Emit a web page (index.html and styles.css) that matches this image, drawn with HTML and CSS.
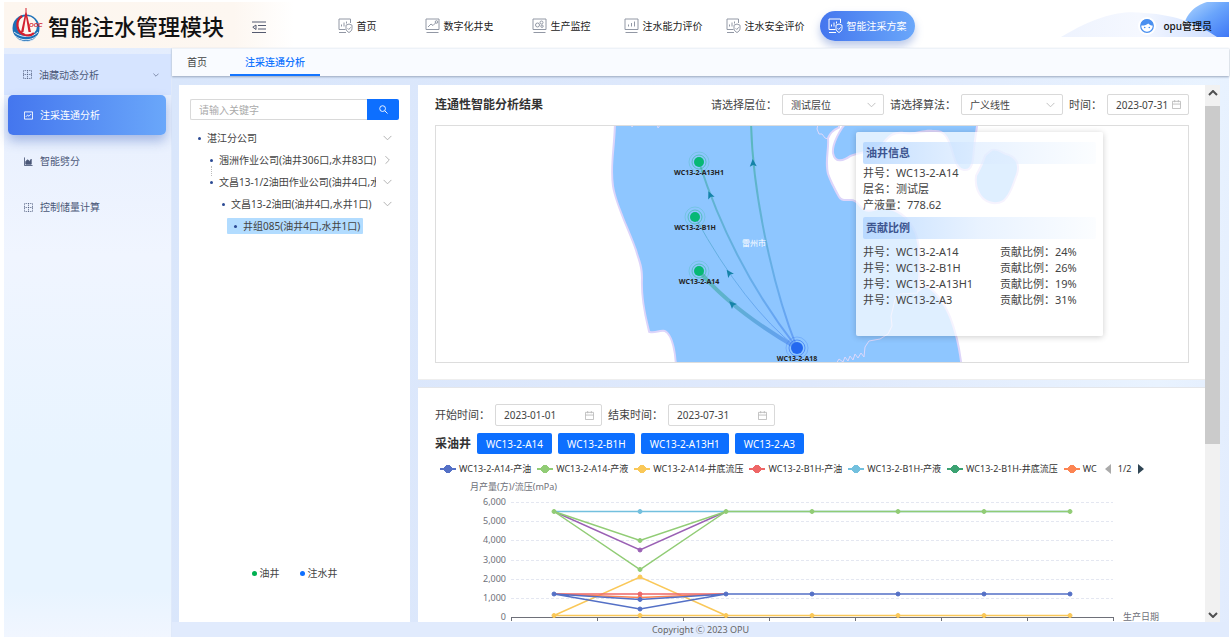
FILE: index.html
```html
<!DOCTYPE html>
<html lang="zh-CN">
<head>
<meta charset="utf-8">
<title>智能注水管理模块</title>
<link rel="stylesheet" href="styles.css">
</head>
<body>
<svg class="defs" aria-hidden="true">
  <symbol id="i-shield" viewBox="0 0 15 16"><path d="M7.5 11.5H1V1h11.500v4M1 14.500h7M3.500 8.500v-2M6 8.500v-4M8.500 5.500v-2"/><path d="M11 6l3 1.200v3.300c0 2-1.500 3.200-3 4-1.500-.8-3-2-3-4V7.200zM9.600 10.300l1.200 1.200 1.900-2.200"/></symbol>
  <symbol id="i-trend" viewBox="0 0 15 16"><path d="M1 1h13v10.500H1zM1.500 14.500h12M3 9l3-3 2 1.500 3-3"/><circle cx="11.500" cy="4" r="1.300"/></symbol>
  <symbol id="i-gears" viewBox="0 0 15 16"><path d="M1 1h13v10.500H1zM1.500 14.500h12"/><circle cx="5.500" cy="7" r="2"/><circle cx="9.500" cy="4.500" r="1.500"/><circle cx="10" cy="8.200" r="1.200"/></symbol>
  <symbol id="i-bars" viewBox="0 0 15 16"><path d="M1 1h13v10.500H1zM1.500 14.500h12M4.500 8.500v-2M7.500 8.500V5M10.500 8.500v-5"/></symbol>
  <symbol id="i-grid" viewBox="0 0 10 10"><path d="M.5.5h9v9h-9zM5 .5v9M.5 5h9" stroke-dasharray="1 1"/></symbol>
  <symbol id="i-down" viewBox="0 0 10 6"><path d="M.7.7L5 5 9.300.7"/></symbol>
  <symbol id="i-cal" viewBox="0 0 10 10"><path d="M.5 1.500h9v8h-9zM.5 4.500h9M3 0v2.500M7 0v2.500"/></symbol>
</svg>

<div class="app">
  <header class="top">
    <svg class="sky" viewBox="0 0 190 35" aria-hidden="true">
      <defs>
        <linearGradient id="ball" x1="0" y1="0" x2="1" y2="1"><stop offset="0" stop-color="#b9dcff"/><stop offset=".5" stop-color="#6aa5fb"/><stop offset="1" stop-color="#3f78f6"/></linearGradient>
        <linearGradient id="hill"><stop offset="0" stop-color="#eef3fe"/><stop offset=".5" stop-color="#f5f8ff"/><stop offset="1" stop-color="#cfdfff"/></linearGradient>
      </defs>
      <path d="M142 35C145 12 155 4 168 0h22v35z" fill="url(#ball)"/>
      <path d="M22 35C60 12 85 8 105 11c35 2 55 12 73 24z" fill="url(#hill)"/>
    </svg>
    <div class="brand">
      <svg class="logo" viewBox="0 0 34 36" aria-hidden="true">
        <circle cx="14" cy="20" r="13.500" fill="#1c70b8"/>
        <circle cx="15" cy="18" r="10" fill="#fdf6ee"/>
        <path d="M2 24c7 6 18 6 24 0M3 28c6 5 16 5 22 0M7 32c5 2 9 2 14 0" fill="none" stroke="#dfeaf5" stroke-width="1"/>
        <path d="M10 8c-7 5-6 16 3 19 4 1 7 0 9-2" fill="none" stroke="#d3202f" stroke-width="2.200"/>
        <path d="M13.500 0h1v4l4.500 20h-2.500L14 9l-2.500 15H9l4.500-20z" fill="#d3202f"/>
        <text x="17" y="19" class="logo-text">OOC</text>
      </svg>
      <h1>智能注水管理模块</h1>
    </div>
    <button class="fold" aria-label="收起菜单"><svg viewBox="0 0 14 12"><path d="M0 1h14M6 4.500h8M6 8h8M0 11.500h14M4 4v4.500L.8 6.200z"/></svg></button>
    <nav class="nav">
      <a href="#"><svg><use href="#i-shield"/></svg>首页</a>
      <a href="#"><svg><use href="#i-trend"/></svg>数字化井史</a>
      <a href="#"><svg><use href="#i-gears"/></svg>生产监控</a>
      <a href="#"><svg><use href="#i-bars"/></svg>注水能力评价</a>
      <a href="#"><svg><use href="#i-shield"/></svg>注水安全评价</a>
      <a href="#" class="on"><svg><use href="#i-shield"/></svg>智能注采方案</a>
    </nav>
    <div class="user">
      <svg viewBox="0 0 18 18" aria-hidden="true"><circle cx="9" cy="9" r="9" fill="#fff"/><circle cx="9" cy="9" r="6.300" fill="#fff" stroke="#4a90f0" stroke-width="1.200"/><path d="M2.700 8.500a6.300 6.300 0 0 1 12.600 0c-2 .3-4-.8-5-2-1.500 1.500-4.500 2.300-7.600 2z" fill="#4a90f0"/><circle cx="6.700" cy="10.500" r=".8" fill="#4a90f0"/><circle cx="11.300" cy="10.500" r=".8" fill="#4a90f0"/></svg>
      <span>opu管理员</span>
    </div>
  </header>

  <div class="body">
    <aside class="side">
      <a href="#" class="group"><svg><use href="#i-grid"/></svg><span>油藏动态分析</span><svg class="more"><use href="#i-down"/></svg></a>
      <a href="#" class="on"><svg viewBox="0 0 10 10"><path d="M.5 1h9v8h-9zM2 6.500l2-2 1.500 1.300L8 3.300"/></svg><span>注采连通分析</span></a>
      <a href="#"><svg viewBox="0 0 10 10"><path d="M.5.5v9h9"/><path d="M2 8V5l2-2 2 2 2-2.500V8z" fill="currentColor"/></svg><span>智能劈分</span></a>
      <a href="#"><svg><use href="#i-grid"/></svg><span>控制储量计算</span></a>
    </aside>

    <div class="main">
      <nav class="tabs"><a href="#">首页</a><a href="#" class="on">注采连通分析</a></nav>

      <div class="work">
        <section class="panel tree-panel">
          <form class="search">
            <input type="text" placeholder="请输入关键字" aria-label="请输入关键字">
            <button type="button" aria-label="搜索"><svg viewBox="0 0 10 10"><circle cx="4" cy="4" r="3.200"/><path d="M6.500 6.500L9.500 9.500"/></svg></button>
          </form>
          <ul class="tree">
            <li class="l1"><span>湛江分公司</span><svg><use href="#i-down"/></svg></li>
            <li class="l2 linked"><span>涠洲作业公司(油井306口,水井83口)</span><svg class="closed"><use href="#i-down"/></svg></li>
            <li class="l2"><span>文昌13-1/2油田作业公司(油井4口,水井1口)</span><svg><use href="#i-down"/></svg></li>
            <li class="l3"><span>文昌13-2油田(油井4口,水井1口)</span><svg><use href="#i-down"/></svg></li>
            <li class="l4"><span class="picked">井组085(油井4口,水井1口)</span></li>
          </ul>
          <div class="key"><span class="oil">油井</span><span class="water">注水井</span></div>
        </section>

        <div class="scroll">
          <section class="panel map-card">
            <div class="bar">
              <h2>连通性智能分析结果</h2>
              <label for="layer">请选择层位：</label>
              <div class="field sel"><select id="layer"><option>测试层位</option></select><svg><use href="#i-down"/></svg></div>
              <label for="algo">请选择算法：</label>
              <div class="field sel"><select id="algo"><option>广义线性</option></select><svg><use href="#i-down"/></svg></div>
              <label for="day">时间：</label>
              <div class="field day"><input id="day" type="text" value="2023-07-31"><svg><use href="#i-cal"/></svg></div>
            </div>
            <div class="map">
              <svg viewBox="436 126 752 236" preserveAspectRatio="xMinYMin slice" role="img" aria-label="井位连通图">
                <defs>
                  <linearGradient id="flow" gradientUnits="userSpaceOnUse" x1="0" y1="350" x2="0" y2="150"><stop offset="0" stop-color="#5e97f6"/><stop offset=".3" stop-color="#62a8ea"/><stop offset="1" stop-color="#53b5b6"/></linearGradient>
                  <linearGradient id="flow2" gradientUnits="userSpaceOnUse" x1="797" y1="348" x2="699" y2="271"><stop offset="0" stop-color="#5e97f6"/><stop offset="1" stop-color="#53b9b0"/></linearGradient>
                  <path id="arrow" d="M0-4L3.500 3.500 0 2-3.500 3.500z"/>
                </defs>
                <g class="land">
                  <path id="shore" d="M616 120C616 145 611 165 614 186C617 205 631 232 637 250C640 261 643 265 643 278C642 300 647 318 650 331C656 332 659 329 665 330C674 334 677 355 677 370H961C959 350 955 332 949 317C943 303 934 290 925 287L917 293C919 270 920 250 915 234C908 217 895 208 880 209Q868 214 863 210C859 208 857 201 851 201C845 201 841 202 838 197C833 188 829 180 827 174C824 160 828 150 827 138C829 133 833 129 838 127V120Z"/>
                  <path d="M850 120C840 130 833 145 834 153C836 163 844 159 850 155C862 151 875 150 883 142C889 134 894 131 904 132C916 134 922 129 933 130C944 129 948 135 952 147C955 157 957 168 964 169C972 170 972 160 973 149C974 140 975 132 977 120Z"/>
                  <path d="M992 151C997 149 1001 154 1009 156C1018 160 1018 168 1016 174C1012 184 1010 194 1003 200C996 204 989 202 984 198C978 192 976 184 977 176C981 169 984 162 986 156Z"/>
                </g>
                <path class="river" d="M631 124l1 3 2-3M657 124l1 4 3-4M818 124l-1 5 2 5 3 0 3 4 3 1"/>
                <path class="river" d="M918 293L900 294 895 299 893 308 891 316 892 326 888 334 880 339 869 341 865 347 864 357 861 353 858 358 855 354 853 360 850 356 848 361 845 357 843 362 839 359 836 364"/>
                <g class="flows">
                  <path d="M797 348C772 285 752 190 751 120" stroke="url(#flow)" stroke-width="2"/>
                  <path d="M797 348Q732 265 699 162" stroke="url(#flow)" stroke-width="2"/>
                  <path d="M797 348Q744 306 695 217" stroke="url(#flow)" stroke-width="1"/>
                  <path d="M797 348Q733 311 699 271" stroke="url(#flow2)" stroke-width="4"/>
                </g>
                <g fill="#1583a8">
                  <use href="#arrow" transform="translate(753 163) rotate(-4)"/>
                  <use href="#arrow" transform="translate(710 195) rotate(-24)"/>
                  <use href="#arrow" transform="translate(729 273) rotate(-36)"/>
                  <use href="#arrow" transform="translate(732 304) rotate(-45)"/>
                </g>
                <g class="well"><circle cx="699" cy="162" r="5"/><circle cx="699" cy="162" r="7"/><circle cx="699" cy="162" r="10"/></g>
                <g class="well"><circle cx="695" cy="217" r="5"/><circle cx="695" cy="217" r="7"/><circle cx="695" cy="217" r="10"/></g>
                <g class="well"><circle cx="699" cy="271" r="5"/><circle cx="699" cy="271" r="7"/><circle cx="699" cy="271" r="10"/></g>
                <g class="well inject"><circle cx="797" cy="348" r="6"/><circle cx="797" cy="348" r="8"/><circle cx="797" cy="348" r="11"/></g>
                <g class="names">
                  <text x="699" y="175">WC13-2-A13H1</text>
                  <text x="695" y="230">WC13-2-B1H</text>
                  <text x="699" y="284">WC13-2-A14</text>
                  <text x="797" y="361">WC13-2-A18</text>
                  <text x="754" y="246" class="city">雷州市</text>
                </g>
              </svg>
              <div class="info">
                <h3>油井信息</h3>
                <p>井号：WC13-2-A14</p>
                <p>层名：测试层</p>
                <p>产液量：778.62</p>
                <h3 class="next">贡献比例</h3>
                <div class="pairs">
                  <span>井号：WC13-2-A14</span><span>贡献比例：24%</span>
                  <span>井号：WC13-2-B1H</span><span>贡献比例：26%</span>
                  <span>井号：WC13-2-A13H1</span><span>贡献比例：19%</span>
                  <span>井号：WC13-2-A3</span><span>贡献比例：31%</span>
                </div>
              </div>
            </div>
          </section>

          <section class="panel chart-card">
            <div class="bar range">
              <label for="from">开始时间：</label>
              <div class="field wide"><input id="from" type="text" value="2023-01-01"><svg><use href="#i-cal"/></svg></div>
              <label for="to">结束时间：</label>
              <div class="field wide"><input id="to" type="text" value="2023-07-31"><svg><use href="#i-cal"/></svg></div>
            </div>
            <div class="wells">
              <h2>采油井</h2>
              <button>WC13-2-A14</button><button>WC13-2-B1H</button><button>WC13-2-A13H1</button><button>WC13-2-A3</button>
            </div>
            <div class="legend">
              <div class="items">
                <span class="c1">WC13-2-A14-产油</span><span class="c2">WC13-2-A14-产液</span><span class="c3">WC13-2-A14-井底流压</span><span class="c4">WC13-2-B1H-产油</span><span class="c5">WC13-2-B1H-产液</span><span class="c6">WC13-2-B1H-井底流压</span><span class="c7">WC</span>
              </div>
              <div class="pager">
                <svg viewBox="0 0 6 10"><path d="M6 0v10L0 5z" fill="#aaa"/></svg><span>1/2</span><svg viewBox="0 0 6 10"><path d="M0 0v10l6-5z" fill="#2f4554"/></svg>
              </div>
            </div>
            <svg class="chart" viewBox="435 480 754 160" preserveAspectRatio="xMinYMin meet" role="img" aria-label="月产量与流压曲线">
              <g class="axis-text">
                <text x="470" y="490">月产量(方)/流压(mPa)</text>
                <text x="1123" y="620">生产日期</text>
                <g text-anchor="end"><text x="506" y="505">6,000</text><text x="506" y="524">5,000</text><text x="506" y="543">4,000</text><text x="506" y="563">3,000</text><text x="506" y="582">2,000</text><text x="506" y="601">1,000</text><text x="506" y="620">0</text></g>
              </g>
              <path class="grid" d="M511 502.500h602M511 521.500h602M511 540.500h602M511 560.500h602M511 579.500h602M511 598.500h602"/>
              <path class="axis" d="M511 617.500h602M511.500 617v4M597.500 617v4M683.500 617v4M769.500 617v4M855.500 617v4M941.500 617v4M1027.500 617v4M1113.500 617v4"/>
              <g class="series">
                <g class="c5"><path d="M554 511.500H1070"/><circle cx="640" cy="511.500" r="2"/></g>
                <g class="c8"><path d="M554 511.500L640 550 726 511.500"/><circle cx="640" cy="550" r="2"/></g>
                <g class="c2"><path d="M554 511.500L640 540.500 726 511.500H1070M554 511.500L640 569.500 726 511.500"/><circle cx="640" cy="540.500" r="2"/><circle cx="640" cy="569.500" r="2"/><circle cx="554" cy="511.500" r="2"/><circle cx="726" cy="511.500" r="2"/><circle cx="812" cy="511.500" r="2"/><circle cx="898" cy="511.500" r="2"/><circle cx="984" cy="511.500" r="2"/><circle cx="1070" cy="511.500" r="2"/></g>
                <g class="c3"><path d="M554 615.500L640 577 726 615.500M554 615.500H1070"/><circle cx="640" cy="577" r="2"/><circle cx="554" cy="615.500" r="2"/><circle cx="640" cy="615.500" r="2"/><circle cx="726" cy="615.500" r="2"/><circle cx="812" cy="615.500" r="2"/><circle cx="898" cy="615.500" r="2"/><circle cx="984" cy="615.500" r="2"/><circle cx="1070" cy="615.500" r="2"/></g>
                <g class="c7"><path d="M554 594L640 597.500 726 594"/><circle cx="640" cy="597.500" r="2"/></g>
                <g class="c4"><path d="M554 594H726"/><circle cx="640" cy="594" r="2"/></g>
                <g class="c1"><path d="M554 594L640 599.500 726 594H1070M554 594L640 609 726 594"/><circle cx="640" cy="599.500" r="2"/><circle cx="640" cy="609" r="2"/><circle cx="554" cy="594" r="2"/><circle cx="726" cy="594" r="2"/><circle cx="812" cy="594" r="2"/><circle cx="898" cy="594" r="2"/><circle cx="984" cy="594" r="2"/><circle cx="1070" cy="594" r="2"/></g>
              </g>
            </svg>
          </section>
        </div>
        <div class="rail" aria-hidden="true"><svg viewBox="0 0 10 6"><path d="M1 5l4-4 4 4"/></svg><i></i><svg viewBox="0 0 10 6"><path d="M1 1l4 4 4-4"/></svg></div>
      </div>
      <footer>Copyright Ⓒ 2023 OPU</footer>
    </div>
  </div>
</div>
</body>
</html>
```
FILE: styles.css
```css
* { box-sizing: border-box; }
body {
  margin: 0;
  padding: 2px 1px 3px 4px;
  height: 100vh;
  background: #fff;
  color: #444;
  font: 10px/16px "Noto Sans", "Noto Sans CJK SC", sans-serif;
}
h1, h2, h3, p, ul { margin: 0; padding: 0; }
a { color: inherit; text-decoration: none; }
svg { display: block; fill: none; stroke: currentColor; flex: none; }
button, input, select { font: inherit; color: inherit; margin: 0; padding: 0; border: 0; background: none; }
input, select { outline: 0; min-width: 0; flex: 1; appearance: none; }
.defs { position: absolute; width: 0; height: 0; }
.app { height: 100%; display: flex; flex-direction: column; }

.top {
  position: relative;
  display: flex;
  align-items: center;
  flex: none;
  height: 46px;
  background: linear-gradient(90deg, #fdf6ef 0, #fdf7f1 230px, #fff 290px);
}
.sky { position: absolute; right: 0; top: 0; width: 190px; height: 35px; stroke: none; }
.brand { display: flex; align-items: center; gap: 2px; width: 230px; padding: 4px 0 0 8px; color: #111; align-self: flex-start; }
.brand .logo { width: 34px; height: 36px; stroke: none; }
.logo-text { font: italic 700 6px "Liberation Sans", sans-serif; fill: #d3202f; }
h1 { font-size: 22px; line-height: 40px; font-weight: 500; white-space: nowrap; }
.fold { margin-left: 18px; color: #555b70; padding-top: 4px; }
.fold svg { width: 14px; height: 12px; }
.nav { display: grid; grid-template-columns: repeat(6, 102px); justify-items: center; margin-left: 40px; padding-top: 1px; }
.nav a { display: flex; align-items: center; gap: 4px; height: 30px; padding: 0 8px; border-radius: 15px; color: #222; white-space: nowrap; }
.nav svg { width: 15px; height: 16px; color: #9298a5; }
.nav .on, .nav .on svg { color: #fff; }
.nav .on { background: linear-gradient(90deg, #4476ee, #6aa7fa); box-shadow: 0 5px 9px #5677c866; }
.user { position: relative; display: flex; align-items: center; gap: 7px; margin-left: auto; padding: 2px 17px 0 0; color: #111; font-weight: 500; }
.user svg { width: 18px; height: 18px; stroke: none; }

.body { flex: 1; min-height: 0; display: flex; }
.side {
  flex: none;
  width: 168px;
  padding-top: 6px;
  background: linear-gradient(180deg, #e4edfd 0, #f0f5ff 35%, #e8f4ff 70%, #e8f4ff 92%, #f1f6ff 100%);
  color: #4b5878;
  border-right: 1px solid #dfe9fa;
}
.side a { display: flex; align-items: center; gap: 7px; height: 40px; margin: 0 5px 6px 4px; padding: 0 16px; }
.side svg { width: 9px; height: 9px; }
.side .group { margin: 0; padding: 0 12px 0 19px; height: 41px; background: #d6e4ff; }
.side .more { width: 6px; height: 4px; margin-left: auto; }
.side .on { color: #fff; background: linear-gradient(90deg, #4476ee, #6aa7fa); border-radius: 5px; box-shadow: 0 6px 12px #5677c877; }

.main { flex: 1; min-width: 0; display: flex; flex-direction: column; background: linear-gradient(100deg, #d9e6fb, #dfe9fc 60%, #e9f3ff 90%, #e1ebfd); }
.tabs { display: flex; flex: none; height: 28px; background: #f9fbff; border-top: 1px solid #edf2f8; box-shadow: 0 1px 2px #9aa8bd; position: relative; }
.tabs a { padding: 5px 15px 0; }
.tabs .on { margin-left: 8px; color: #1475ff; font-weight: 500; border-bottom: 2px solid #1475ff; }

.work { flex: 1; min-height: 0; display: flex; padding: 9px 9px 0 7px; }
.panel { background: #fff; }
.tree-panel { width: 231px; flex: none; margin-right: 8px; padding: 14px 11px 41px; display: flex; flex-direction: column; }
.search { display: flex; height: 21px; }
.search input { border: 1px solid #d9d9d9; border-right: 0; border-radius: 2px 0 0 2px; padding: 0 8px; }
.search input::placeholder { color: #aaa; opacity: 1; }
.search button { width: 32px; background: #0d6fff; color: #fff; border-radius: 0 2px 2px 0; display: grid; place-items: center; }
.search svg { width: 9px; height: 9px; }
.tree { list-style: none; margin-top: 7px; }
.tree li { position: relative; display: flex; align-items: center; gap: 7px; height: 22px; padding-right: 7px; white-space: nowrap; }
.tree li span { flex: 1; min-width: 0; overflow: hidden; display: flex; align-items: center; gap: 6px; }
.tree li span::before { content: ""; width: 3px; height: 3px; border-radius: 50%; background: #2b4a94; flex: none; }
.tree svg { width: 9px; height: 6px; color: #aaa; }
.tree .closed { transform: rotate(-90deg); }
.l1 { padding-left: 8px; }
.l2 { padding-left: 20px; }
.l3 { padding-left: 32px; }
.l4 { padding-left: 37px; }
.linked::after { content: ""; position: absolute; left: 21px; top: 17px; height: 10px; border-left: 1px dotted #bbb; }
.tree .picked { flex: none; padding: 0 3px 0 7px; background: #b2dcff; border-radius: 1px; }
.key { display: flex; gap: 20px; justify-content: center; margin-top: auto; }
.key span { display: flex; align-items: center; gap: 3px; }
.key span::before { content: ""; width: 5px; height: 5px; border-radius: 50%; background: #00b050; }
.key .water::before { background: #0d6fff; }

.scroll { flex: 1; min-width: 0; overflow: hidden; }
.map-card { padding: 9px 16px 16px 17px; border-bottom: 1px solid #eee; }
.bar { display: flex; align-items: center; height: 21px; font-size: 11px; }
h2 { font-size: 12px; line-height: 20px; font-weight: 700; color: #333; }
.bar h2 { margin-right: auto; }
.bar label { margin: 0 5px 0 6px; white-space: nowrap; }
.field { display: flex; align-items: center; height: 21px; border: 1px solid #d9d9d9; border-radius: 2px; padding: 0 7px 0 8px; font-size: 10px; color: #444; }
.field svg { width: 9px; height: 9px; color: #bbb; }
.sel { width: 102px; }
.sel svg { height: 6px; }
.day { width: 82px; }
.wide { width: 107px; height: 22px; }
.map { position: relative; margin-top: 10px; border: 1px solid #ddd; height: 238px; }
.map > svg { width: 100%; height: 100%; stroke: none; }
.land path { fill: #8ec6ff; stroke: #ddd5fa; stroke-width: 4; paint-order: stroke; }
.river { stroke: #dcd8fb; stroke-width: 1; }
.flows { opacity: .85; }
.well circle { fill: none; stroke: #2dbb92; stroke-opacity: .6; }
.well circle:first-child { fill: #07b874; stroke: none; }
.well circle:last-child { stroke-opacity: .25; }
.inject circle { stroke: #2d6df0; }
.inject circle:first-child { fill: #2468ef; }
.names { font-size: 7px; font-weight: 700; fill: #222; text-anchor: middle; }
.names .city { font-size: 8px; font-weight: 400; fill: #fff; }
.info {
  position: absolute;
  right: 85px;
  top: 6px;
  width: 247px;
  height: 204px;
  padding: 10px 7px;
  background: #ffffffb8;
  border-radius: 2px;
  box-shadow: 0 1px 6px #0003;
  font-size: 11px;
}
.info h3 { height: 22px; padding-left: 3px; font-size: 11px; line-height: 22px; color: #3d5590; background: linear-gradient(90deg, #a9d0ffb0, #d8e9ff90 50%, #f5faff60); border-radius: 2px; margin-bottom: 1px; }
.info .next { margin-top: 4px; }
.pairs { display: grid; grid-template-columns: 137px 1fr; margin-top: 5px; }

.chart-card { margin-top: 7px; padding: 16px 16px 0 17px; border-top: 1px solid #e4e6ea; }
.range { height: 22px; }
.range label:first-child { margin-left: 0; }
.wells { display: flex; align-items: center; gap: 6px; margin-top: 7px; }
.wells button { height: 21px; padding: 0 9px; background: #0d6fff; color: #fff; border-radius: 2px; }
.legend { display: flex; align-items: center; gap: 8px; padding: 7px 0 3px 5px; font-size: 9px; color: #333; }
.items { display: flex; gap: 6px; white-space: nowrap; overflow: hidden; }
.items span { display: flex; align-items: center; gap: 3px; }
.items span::before { content: ""; width: 16px; height: 8px; background: radial-gradient(circle at 8px 4px, var(--c) 0 4px, transparent 4px), linear-gradient(transparent 3px, var(--c) 3px 5px, transparent 5px); }
.pager { display: flex; align-items: center; gap: 7px; }
.pager svg { width: 6px; height: 10px; stroke: none; }
.c1 { --c: #5470c6; }
.c2 { --c: #91cc75; }
.c3 { --c: #fac858; }
.c4 { --c: #ee6666; }
.c5 { --c: #73c0de; }
.c6 { --c: #3ba272; }
.c7 { --c: #fc8452; }
.c8 { --c: #9a60b4; }
.chart { width: 100%; height: 160px; stroke: none; }
.axis-text { font-size: 9px; fill: #6e7079; }
.grid { stroke: #e4e7f1; stroke-dasharray: 3 2; }
.axis { stroke: #6e7079; }
.series path { stroke: var(--c); stroke-width: 1.5; }
.series circle { fill: var(--c); stroke: var(--c); }

.rail { width: 15px; flex: none; background: #f1f1f1; display: flex; flex-direction: column; align-items: center; padding: 5px 0 4px; color: #505050; }
.rail svg { width: 10px; height: 6px; stroke-width: 2; }
.rail i { width: 100%; height: 64%; margin: 10px 0 auto; background: #cbcbcb; }
footer { flex: none; height: 15px; font-size: 9px; line-height: 15px; text-align: center; color: #666; background: #e1ebfd; }
```
